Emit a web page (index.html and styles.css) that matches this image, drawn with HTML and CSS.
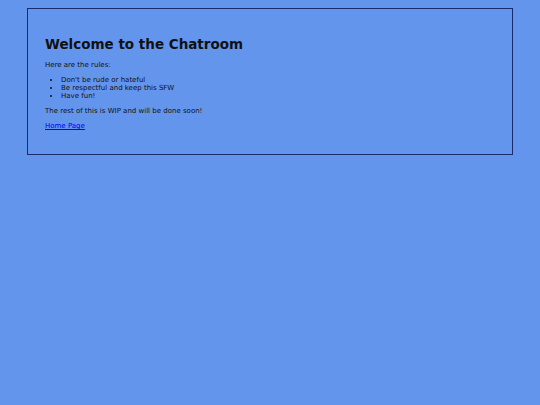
FILE: index.html
```html
<!DOCTYPE html>
<html>
<head>
<meta charset="utf-8">
<link rel="stylesheet" href="styles.css">
<title>Chatroom</title>
</head>
<body>
<div class="box">
  <h1 class="title">Welcome to the Chatroom</h1>
  <p>Here are the rules:</p>
  <ul class="rules">
    <li>Don't be rude or hateful</li>
    <li>Be respectful and keep this SFW</li>
    <li>Have fun!</li>
  </ul>
  <p>The rest of this is WIP and will be done soon!</p>
  <p><a class="link" href="#">Home Page</a></p>
</div>
</body>
</html>
```
FILE: styles.css
```css
html, body {
  background: #6495ED;
}
body {
  margin: 8px 0;
  font-family: "DejaVu Sans", Verdana, sans-serif;
  font-size: 7px;
  color: #111;
}
.box {
  box-sizing: border-box;
  width: 90%;
  margin: 0 auto;
  border: 1px solid #1b2a6b;
  padding: 17px;
}
.title {
  font-size: 13.5px;
  margin: 9.7px 0;
}
p {
  margin: 7px 0;
}
.rules {
  margin: 7px 0;
  padding-left: 16px;
}
.link {
  color: #0000EE;
}
```
